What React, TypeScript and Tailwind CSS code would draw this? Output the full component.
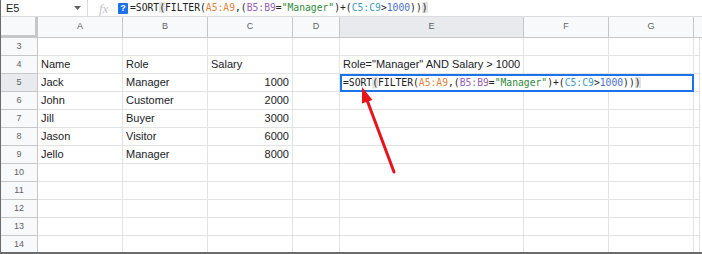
import React from 'react'

const cols = [
  { key: 'A', w: 'w-[85px]' },
  { key: 'B', w: 'w-[85px]' },
  { key: 'C', w: 'w-[85px]' },
  { key: 'D', w: 'w-[47px]' },
  { key: 'E', w: 'w-[184px]' },
  { key: 'F', w: 'w-[85px]' },
  { key: 'G', w: 'w-[85px]' },
]

const data: Record<number, string[]> = {
  4: ['Name', 'Role', 'Salary', '', 'Role="Manager" AND Salary > 1000', '', ''],
  5: ['Jack', 'Manager', '1000', '', '', '', ''],
  6: ['John', 'Customer', '2000', '', '', '', ''],
  7: ['Jill', 'Buyer', '3000', '', '', '', ''],
  8: ['Jason', 'Visitor', '6000', '', '', '', ''],
  9: ['Jello', 'Manager', '8000', '', '', '', ''],
}

const rows = [3, 4, 5, 6, 7, 8, 9, 10, 11, 12, 13, 14]

function Formula() {
  return (
    <span className="font-['DejaVu_Sans_Mono',monospace] text-[9.7px] text-[#202124] whitespace-nowrap">
      =SORT<span className="bg-[#e3e3e3]">(</span>FILTER(
      <span className="text-[#e8833a]">A5:A9</span>,(
      <span className="text-[#9561b0]">B5:B9</span>=
      <span className="text-[#2f8a3b]">"Manager"</span>)+(
      <span className="text-[#3c9dc4]">C5:C9</span>&gt;
      <span className="text-[#4a6fd0]">1000</span>))
      <span className="bg-[#e3e3e3]">)</span>
    </span>
  )
}

export default function App() {
  return (
    <div className="relative w-[702px] h-[254px] overflow-hidden bg-white border-l border-b-2 border-[#6b6b6b] font-['Liberation_Sans',Arial,sans-serif]">
      {/* formula bar */}
      <div className="flex items-center h-[17px] border-b border-[#dadce0]">
        <div className="flex items-center justify-between w-[87px] h-full pl-[5px] pr-[6px] border-r border-[#dadce0]">
          <span className="text-[11px] text-[#202124]">E5</span>
          <svg width="7" height="4" viewBox="0 0 7 4">
            <path d="M0 0h7L3.5 4z" fill="#5f6368" />
          </svg>
        </div>
        <span className="ml-[11px] w-[16px] font-['Liberation_Serif',serif] italic text-[13px] text-[#c4c4c4] leading-none">fx</span>
        <span className="ml-[3px] flex items-center justify-center w-[10px] h-[11px] rounded-[1px] bg-[#1a73e8] text-white text-[9px] font-bold leading-none">?</span>
        <span className="ml-[2px] flex items-center">
          <Formula />
        </span>
      </div>

      {/* column headers */}
      <div className="flex h-[21px]">
        <div className="w-[37px] h-full bg-[#f8f9fa] border-r-[3px] border-b-[3px] border-[#c7c7c7]" />
        {cols.map((c) => (
          <div
            key={c.key}
            className={`${c.w} shrink-0 h-full flex items-center justify-center border-r border-b border-[#c7c7c7] text-[9px] text-[#5f6368] ${c.key === 'E' ? 'bg-[#e8eaed]' : 'bg-[#f8f9fa]'}`}
          >
            {c.key}
          </div>
        ))}
        <div className="flex-1 h-full bg-[#f8f9fa] border-b border-[#c7c7c7]" />
      </div>

      {/* rows */}
      {rows.map((r) => (
        <div key={r} className="flex h-[18px]">
          <div
            className={`w-[37px] shrink-0 h-full flex items-center justify-center border-r border-b border-[#c7c7c7] text-[9px] text-[#5f6368] ${r === 5 ? 'bg-[#e8eaed]' : 'bg-[#f8f9fa]'}`}
          >
            {r}
          </div>
          {r === 5 ? (
            <>
              {cols.slice(0, 4).map((c, i) => (
                <Cell key={c.key} w={c.w} text={data[5][i]} right={i === 2} />
              ))}
              <div className="w-[354px] shrink-0 h-full border-2 border-[#1a73e8] flex items-center pl-[1px] bg-white">
                <Formula />
              </div>
            </>
          ) : (
            cols.map((c, i) => (
              <Cell key={c.key} w={c.w} text={data[r]?.[i] ?? ''} right={i === 2 && r > 4} />
            ))
          )}
          <div className="flex-1 h-full border-b border-r border-[#e2e3e3] mr-[2px]" />
        </div>
      ))}

      {/* red arrow */}
      <svg className="absolute left-0 top-0 pointer-events-none" width="702" height="254">
        <line x1="393" y1="172" x2="366" y2="100" stroke="#e8141b" strokeWidth="3" strokeLinecap="round" />
        <polygon points="361,87 371.5,100 361,103.5" fill="#e8141b" />
      </svg>
    </div>
  )
}

function Cell({ w, text, right }: { w: string; text: string; right?: boolean }) {
  return (
    <div
      className={`${w} shrink-0 h-full flex items-center px-[3px] border-r border-b border-[#e2e3e3] text-[11px] text-[#202124] whitespace-nowrap ${right ? 'justify-end' : ''}`}
    >
      {text}
    </div>
  )
}
